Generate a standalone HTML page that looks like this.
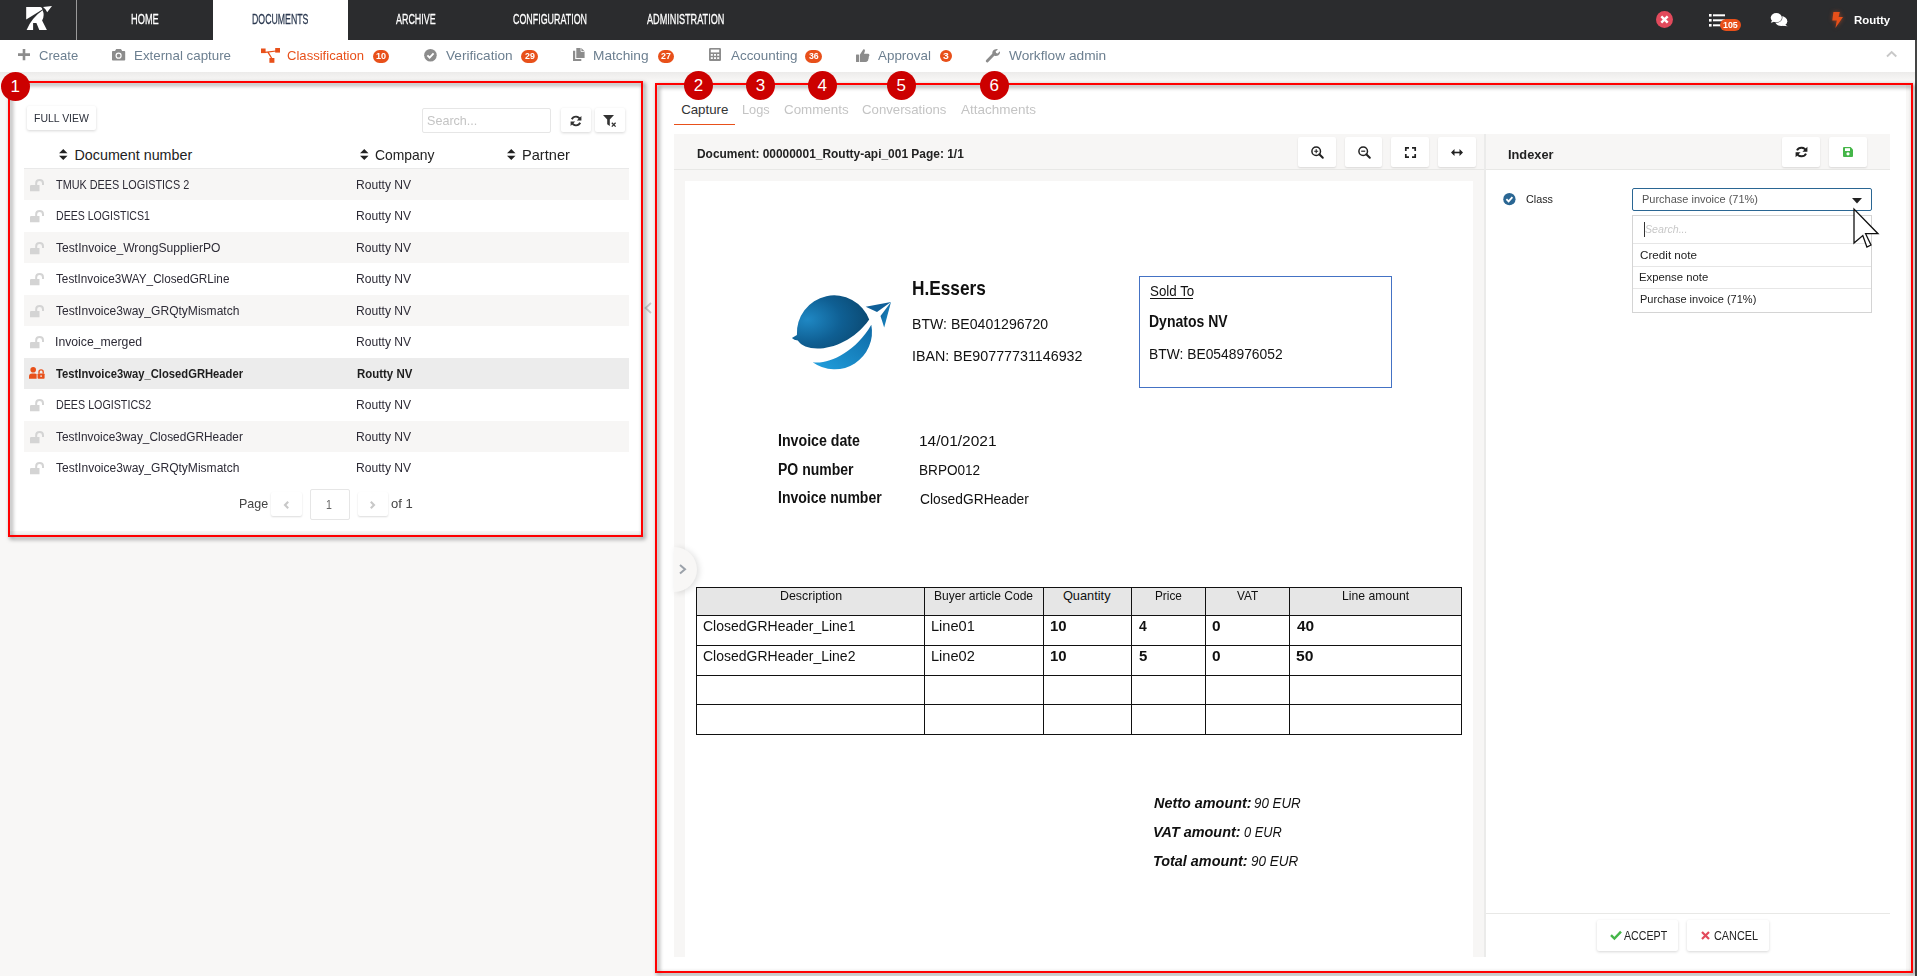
<!DOCTYPE html><html><head><meta charset="utf-8"><style>
html,body{margin:0;padding:0;}
body{width:1917px;height:976px;position:relative;overflow:hidden;background:#f8f7f6;font-family:"Liberation Sans",sans-serif;}
.t{position:absolute;white-space:nowrap;line-height:1;transform-origin:0 0;}
.r{position:absolute;box-sizing:border-box;}
svg.r{overflow:visible;}
</style></head><body>
<div class="r" style="left:0px;top:0px;width:1917px;height:40px;background:#2b2c2e"></div>
<div class="r" style="left:76px;top:0px;width:1px;height:40px;background:#9a9a9a"></div>
<div class="r" style="left:213px;top:0px;width:135px;height:40px;background:#fff"></div>
<svg class="r" style="left:0px;top:0px;" width="60" height="40" viewBox="0 0 60 40"><g fill="#fff"><path d="M26.2 6.9 L40.5 7.1 Q42.6 7.8 42.4 9.6 L26.2 19.4 Z"/><path d="M26.6 29.9 Q32 17.5 42.6 10.3 Q45 15.5 42.1 20.6 L46.9 29.9 L39.3 29.9 L36.4 23 L33.1 23 L33.1 29.9 Z"/><path d="M43 6.9 L52 5.9 L47.2 12.2 L45.6 9.4 Z"/></g></svg>
<div class="t" style="left:131.46px;top:10.60px;font-size:15.40px;color:#fff;transform:scaleX(0.6020);-webkit-text-stroke:0.3px #fff;">HOME</div>
<div class="t" style="left:252.10px;top:10.60px;font-size:15.40px;color:#2b3950;transform:scaleX(0.5688);-webkit-text-stroke:0.3px #2b3950;">DOCUMENTS</div>
<div class="t" style="left:396.00px;top:10.60px;font-size:15.40px;color:#fff;transform:scaleX(0.5808);-webkit-text-stroke:0.3px #fff;">ARCHIVE</div>
<div class="t" style="left:513.25px;top:10.60px;font-size:15.40px;color:#fff;transform:scaleX(0.5783);-webkit-text-stroke:0.3px #fff;">CONFIGURATION</div>
<div class="t" style="left:647.00px;top:10.60px;font-size:15.40px;color:#fff;transform:scaleX(0.5926);-webkit-text-stroke:0.3px #fff;">ADMINISTRATION</div>
<svg class="r" style="left:1656px;top:10.5px;" width="17" height="17" viewBox="0 0 17 17"><circle cx="8.5" cy="8.5" r="8.5" fill="#e24a5c"/><path d="M5.3 5.3 L11.7 11.7 M11.7 5.3 L5.3 11.7" stroke="#fff" stroke-width="2.4"/></svg>
<svg class="r" style="left:1709px;top:13.5px;" width="16" height="13" viewBox="0 0 16 13"><g fill="#fff"><rect x="0" y="0" width="2.6" height="2.6"/><rect x="4" y="0.3" width="12" height="2"/><rect x="0" y="5" width="2.6" height="2.6"/><rect x="4" y="5.3" width="12" height="2"/><rect x="0" y="10" width="2.6" height="2.6"/><rect x="4" y="10.3" width="12" height="2"/></g></svg>
<div class="r" style="left:1720px;top:18.8px;width:21px;height:12.4px;background:#e8501a;border-radius:7px"></div>
<div class="t" style="left:1722.97px;top:20.35px;font-size:9.50px;color:#fff;font-weight:bold;transform:scaleX(0.9327);">105</div>
<svg class="r" style="left:1769px;top:11px;" width="20" height="17" viewBox="0 0 20 17"><ellipse cx="12.3" cy="10.2" rx="6" ry="4.9" fill="#fff"/><path d="M15.5 13.2 L18.6 15.2 L13.5 14.8 Z" fill="#fff"/><ellipse cx="7.3" cy="6.7" rx="6.1" ry="5.1" fill="#2b2c2e"/><ellipse cx="7.3" cy="6.7" rx="5.6" ry="4.6" fill="#fff"/><path d="M3 9.6 L1.8 11.8 L5.6 10.8 Z" fill="#fff"/></svg>
<svg class="r" style="left:1831px;top:11px;filter:drop-shadow(0 0 2px rgba(232,80,26,.6))" width="13" height="18" viewBox="0 0 13 18"><path d="M2.4 1.1 L8.8 1.1 L7.6 6.1 L12 6.1 L4.4 17 L5.8 9.6 L1.3 9.6 Z" fill="#e8501a"/></svg>
<div class="t" style="left:1854.26px;top:14.80px;font-size:11.40px;color:#fff;font-weight:bold;transform:scaleX(1.0045);">Routty</div>
<div class="r" style="left:0px;top:40px;width:1917px;height:32px;background:#fff"></div>
<div class="r" style="left:0px;top:72px;width:1917px;height:9px;background:linear-gradient(#ecebea,#f8f7f6)"></div>
<div class="r" style="left:1915px;top:40px;width:2px;height:936px;background:#454545"></div>
<svg class="r" style="left:17.5px;top:49.4px;" width="12" height="11.2" viewBox="0 0 12 11.2"><path d="M6 0 V11.2 M0 5.6 H12" stroke="#8c8c8c" stroke-width="2.6"/></svg>
<div class="t" style="left:38.75px;top:48.90px;font-size:13.20px;color:#6c7f90;transform:scaleX(0.9893);">Create</div>
<svg class="r" style="left:111.8px;top:49px;" width="13.2" height="11.6" viewBox="0 0 13.2 11.6"><path d="M4.2 0 H9 L10.2 2 H12.4 Q13.2 2 13.2 2.8 V10.8 Q13.2 11.6 12.4 11.6 H0.8 Q0 11.6 0 10.8 V2.8 Q0 2 0.8 2 H3 Z" fill="#8c8c8c"/><circle cx="6.6" cy="6.7" r="3.1" fill="#fff"/><circle cx="6.6" cy="6.7" r="1.9" fill="#8c8c8c"/></svg>
<div class="t" style="left:133.53px;top:48.90px;font-size:13.20px;color:#6c7f90;transform:scaleX(1.0105);">External capture</div>
<svg class="r" style="left:261px;top:47.8px;" width="19.3" height="14.8" viewBox="0 0 19.3 14.8"><g fill="#e8501a"><rect x="0" y="0.5" width="4.6" height="4.6"/><rect x="14.2" y="0" width="4.8" height="4.6"/><rect x="8.4" y="10" width="5" height="4.8"/><path d="M3.5 3.8 L15 2.6 L15.2 3.6 L8 4.6 L11.5 10.5 L10.5 11 L6.5 4.8 L3.8 5 Z"/></g></svg>
<div class="t" style="left:286.85px;top:48.90px;font-size:13.20px;color:#e8501a;transform:scaleX(0.9922);">Classification</div>
<svg class="r" style="left:424px;top:48.9px;" width="12.9" height="12.6" viewBox="0 0 12.9 12.6"><circle cx="6.45" cy="6.3" r="6.3" fill="#8c8c8c"/><path d="M3.4 6.4 L5.6 8.6 L9.6 4.4" stroke="#fff" stroke-width="1.9" fill="none"/></svg>
<div class="t" style="left:446.00px;top:48.90px;font-size:13.20px;color:#6c7f90;transform:scaleX(1.0321);">Verification</div>
<svg class="r" style="left:573px;top:48.4px;" width="11.6" height="12.9" viewBox="0 0 11.6 12.9"><g fill="#8c8c8c"><path d="M3.3 0 H8.3 L11.6 3.2 V10 H3.3 Z"/><path d="M0 2.8 H2.2 V11 H8.3 V12.9 H0 Z"/></g><path d="M8 0 V3.5 H11.6" fill="none" stroke="#fff" stroke-width="0.8"/></svg>
<div class="t" style="left:593.30px;top:48.90px;font-size:13.20px;color:#6c7f90;transform:scaleX(1.0391);">Matching</div>
<svg class="r" style="left:709px;top:48.4px;" width="12" height="12.9" viewBox="0 0 12 12.9"><rect x="0" y="0" width="12" height="12.9" rx="1.2" fill="#8c8c8c"/><rect x="1.8" y="1.6" width="8.4" height="2.8" fill="#fff"/><g fill="#fff"><rect x="1.8" y="6" width="2" height="1.8"/><rect x="5" y="6" width="2" height="1.8"/><rect x="8.2" y="6" width="2" height="1.8"/><rect x="1.8" y="9.2" width="2" height="1.8"/><rect x="5" y="9.2" width="2" height="1.8"/><rect x="8.2" y="9.2" width="2" height="1.8"/></g></svg>
<div class="t" style="left:730.60px;top:48.90px;font-size:13.20px;color:#6c7f90;transform:scaleX(1.0173);">Accounting</div>
<svg class="r" style="left:855.6px;top:48.7px;" width="13.4" height="13.1" viewBox="0 0 13.4 13.1"><g fill="#8c8c8c"><rect x="0" y="5.6" width="3" height="7.5" rx="0.5"/><path d="M3.8 5.8 L6.6 1.5 Q7.2 0 8.2 0.3 Q9.4 0.8 8.8 2.6 L8 4.8 H12 Q13.4 4.8 13.4 6.2 Q13.4 7 12.8 7.3 Q13.3 8 12.6 8.8 Q13 9.6 12.2 10.4 Q12.4 11.4 11.6 12 Q11 13.1 9.5 13.1 H3.8 Z"/></g></svg>
<div class="t" style="left:878.20px;top:48.90px;font-size:13.20px;color:#6c7f90;transform:scaleX(1.0160);">Approval</div>
<svg class="r" style="left:985.9px;top:48.7px;" width="14.1" height="13.1" viewBox="0 0 14.1 13.1"><path d="M1.2 12 L7.5 5.6" stroke="#8c8c8c" stroke-width="2.8" stroke-linecap="round"/><path d="M6.3 4.6 Q6 1 9.6 0.2 Q11.2 0 12 0.3 L9.6 2.6 L10.2 4 L11.6 4.5 L13.9 2.2 Q14.3 3.5 13.6 5 Q12.2 7.6 8.8 7 Z" fill="#8c8c8c"/></svg>
<div class="t" style="left:1008.50px;top:48.90px;font-size:13.20px;color:#6c7f90;transform:scaleX(1.0392);">Workflow admin</div>
<div class="r" style="left:373.3px;top:50px;width:15.5px;height:12.6px;background:#e8501a;border-radius:7px"></div>
<div class="t" style="left:375.91px;top:52.30px;font-size:9.00px;color:#fff;font-weight:bold;transform:scaleX(1.0071);">10</div>
<div class="r" style="left:521px;top:50px;width:17px;height:12.6px;background:#e8501a;border-radius:7px"></div>
<div class="t" style="left:524.64px;top:52.30px;font-size:9.00px;color:#fff;font-weight:bold;transform:scaleX(0.9782);">29</div>
<div class="r" style="left:657.8px;top:50px;width:16.200000000000045px;height:12.6px;background:#e8501a;border-radius:7px"></div>
<div class="t" style="left:661.03px;top:52.30px;font-size:9.00px;color:#fff;font-weight:bold;transform:scaleX(0.9829);">27</div>
<div class="r" style="left:805px;top:50px;width:17px;height:12.6px;background:#e8501a;border-radius:7px"></div>
<div class="t" style="left:808.73px;top:52.30px;font-size:9.00px;color:#fff;font-weight:bold;transform:scaleX(0.9689);">36</div>
<div class="r" style="left:939.9px;top:50px;width:12.2px;height:12.2px;background:#e8501a;border-radius:50%"></div>
<div class="t" style="left:943.19px;top:52.10px;font-size:9.00px;color:#fff;font-weight:bold;transform:scaleX(1.1556);">3</div>
<svg class="r" style="left:1886px;top:51px;" width="11.3" height="6.5" viewBox="0 0 11.3 6.5"><path d="M1 5.5 L5.65 1 L10.3 5.5" stroke="#c8c8c8" stroke-width="1.9" fill="none"/></svg>
<div class="r" style="left:10px;top:83px;width:631px;height:448px;background:#fff"></div>
<div class="r" style="left:27px;top:106px;width:69px;height:24px;background:#fff;border-radius:2px;box-shadow:0 1px 3px rgba(0,0,0,.16)"></div>
<div class="t" style="left:33.96px;top:113.30px;font-size:11.80px;color:#2b2f3a;transform:scaleX(0.8877);">FULL VIEW</div>
<div class="r" style="left:421.5px;top:108.4px;width:129.1px;height:24.3px;background:#fff;border:1px solid #e6e6e6;border-radius:2px"></div>
<div class="t" style="left:426.73px;top:113.60px;font-size:13.00px;color:#c4c4c4;transform:scaleX(0.9680);">Search...</div>
<div class="r" style="left:561px;top:108px;width:30px;height:24.3px;background:#fff;border-radius:2px;box-shadow:0 1px 3px rgba(0,0,0,.16)"></div>
<div class="r" style="left:595.2px;top:108px;width:29.8px;height:24.3px;background:#fff;border-radius:2px;box-shadow:0 1px 3px rgba(0,0,0,.16)"></div>
<svg class="r" style="left:570px;top:114.5px;" width="12" height="12" viewBox="0 0 12 12"><path d="M10.2 4.6 A4.6 4.6 0 0 0 1.8 4.2" stroke="#333" stroke-width="1.9" fill="none"/><path d="M1.8 7.4 A4.6 4.6 0 0 0 10.2 7.8" stroke="#333" stroke-width="1.9" fill="none"/><path d="M11.4 1 V5.6 H6.8 Z M0.6 11 V6.4 H5.2 Z" fill="#333"/></svg>
<svg class="r" style="left:603px;top:114.5px;" width="14" height="12" viewBox="0 0 14 12"><path d="M0 0 H11 L6.8 4.6 V11 L4.2 9.2 V4.6 Z" fill="#333"/><path d="M8.8 7.8 L12.6 11.6 M12.6 7.8 L8.8 11.6" stroke="#333" stroke-width="1.3"/></svg>
<svg class="r" style="left:58.8px;top:149.4px;" width="8.5" height="11" viewBox="0 0 8.5 11"><path d="M4.25 0 L8.5 4.3 H0 Z M4.25 11 L8.5 6.7 H0 Z" fill="#222"/></svg>
<div class="t" style="left:74.56px;top:147.65px;font-size:14.30px;color:#222;">Document number</div>
<svg class="r" style="left:359.6px;top:149.4px;" width="8.5" height="11" viewBox="0 0 8.5 11"><path d="M4.25 0 L8.5 4.3 H0 Z M4.25 11 L8.5 6.7 H0 Z" fill="#222"/></svg>
<div class="t" style="left:375.10px;top:147.65px;font-size:14.30px;color:#222;transform:scaleX(0.9721);">Company</div>
<svg class="r" style="left:506.8px;top:149.4px;" width="8.5" height="11" viewBox="0 0 8.5 11"><path d="M4.25 0 L8.5 4.3 H0 Z M4.25 11 L8.5 6.7 H0 Z" fill="#222"/></svg>
<div class="t" style="left:521.83px;top:147.65px;font-size:14.30px;color:#222;transform:scaleX(1.0210);">Partner</div>
<div class="r" style="left:24px;top:168px;width:605px;height:1px;background:#e9e9e9"></div>
<div class="r" style="left:24px;top:168.5px;width:605px;height:31.5px;background:#f7f6f5"></div>
<svg class="r" style="left:29.8px;top:178.5px;" width="14.5" height="12.2" viewBox="0 0 14.5 12.2"><path d="M1.2 6 H9.5 V12.2 H0 V7 Q0 6 1.2 6Z" fill="#d4d4d4"/><path d="M6.2 6.5 V4.2 Q6.2 1 9.6 1 Q13 1 13 4.2 V6" stroke="#d4d4d4" stroke-width="2" fill="none"/></svg>
<div class="t" style="left:56.18px;top:178.60px;font-size:12.60px;color:#2d2b36;transform:scaleX(0.8615);">TMUK DEES LOGISTICS 2</div>
<div class="t" style="left:356.33px;top:178.60px;font-size:12.60px;color:#2d2b36;transform:scaleX(0.9595);">Routty NV</div>
<svg class="r" style="left:29.8px;top:210.0px;" width="14.5" height="12.2" viewBox="0 0 14.5 12.2"><path d="M1.2 6 H9.5 V12.2 H0 V7 Q0 6 1.2 6Z" fill="#d4d4d4"/><path d="M6.2 6.5 V4.2 Q6.2 1 9.6 1 Q13 1 13 4.2 V6" stroke="#d4d4d4" stroke-width="2" fill="none"/></svg>
<div class="t" style="left:55.55px;top:210.10px;font-size:12.60px;color:#2d2b36;transform:scaleX(0.8385);">DEES LOGISTICS1</div>
<div class="t" style="left:356.33px;top:210.10px;font-size:12.60px;color:#2d2b36;transform:scaleX(0.9595);">Routty NV</div>
<div class="r" style="left:24px;top:231.5px;width:605px;height:31.5px;background:#f7f6f5"></div>
<svg class="r" style="left:29.8px;top:241.5px;" width="14.5" height="12.2" viewBox="0 0 14.5 12.2"><path d="M1.2 6 H9.5 V12.2 H0 V7 Q0 6 1.2 6Z" fill="#d4d4d4"/><path d="M6.2 6.5 V4.2 Q6.2 1 9.6 1 Q13 1 13 4.2 V6" stroke="#d4d4d4" stroke-width="2" fill="none"/></svg>
<div class="t" style="left:56.16px;top:241.60px;font-size:12.60px;color:#2d2b36;transform:scaleX(0.9597);">TestInvoice_WrongSupplierPO</div>
<div class="t" style="left:356.33px;top:241.60px;font-size:12.60px;color:#2d2b36;transform:scaleX(0.9595);">Routty NV</div>
<svg class="r" style="left:29.8px;top:273.0px;" width="14.5" height="12.2" viewBox="0 0 14.5 12.2"><path d="M1.2 6 H9.5 V12.2 H0 V7 Q0 6 1.2 6Z" fill="#d4d4d4"/><path d="M6.2 6.5 V4.2 Q6.2 1 9.6 1 Q13 1 13 4.2 V6" stroke="#d4d4d4" stroke-width="2" fill="none"/></svg>
<div class="t" style="left:56.17px;top:273.10px;font-size:12.60px;color:#2d2b36;transform:scaleX(0.9314);">TestInvoice3WAY_ClosedGRLine</div>
<div class="t" style="left:356.33px;top:273.10px;font-size:12.60px;color:#2d2b36;transform:scaleX(0.9595);">Routty NV</div>
<div class="r" style="left:24px;top:294.5px;width:605px;height:31.5px;background:#f7f6f5"></div>
<svg class="r" style="left:29.8px;top:304.5px;" width="14.5" height="12.2" viewBox="0 0 14.5 12.2"><path d="M1.2 6 H9.5 V12.2 H0 V7 Q0 6 1.2 6Z" fill="#d4d4d4"/><path d="M6.2 6.5 V4.2 Q6.2 1 9.6 1 Q13 1 13 4.2 V6" stroke="#d4d4d4" stroke-width="2" fill="none"/></svg>
<div class="t" style="left:56.16px;top:304.60px;font-size:12.60px;color:#2d2b36;transform:scaleX(0.9564);">TestInvoice3way_GRQtyMismatch</div>
<div class="t" style="left:356.33px;top:304.60px;font-size:12.60px;color:#2d2b36;transform:scaleX(0.9595);">Routty NV</div>
<svg class="r" style="left:29.8px;top:336.0px;" width="14.5" height="12.2" viewBox="0 0 14.5 12.2"><path d="M1.2 6 H9.5 V12.2 H0 V7 Q0 6 1.2 6Z" fill="#d4d4d4"/><path d="M6.2 6.5 V4.2 Q6.2 1 9.6 1 Q13 1 13 4.2 V6" stroke="#d4d4d4" stroke-width="2" fill="none"/></svg>
<div class="t" style="left:55.30px;top:336.10px;font-size:12.60px;color:#2d2b36;transform:scaleX(0.9708);">Invoice_merged</div>
<div class="t" style="left:356.33px;top:336.10px;font-size:12.60px;color:#2d2b36;transform:scaleX(0.9595);">Routty NV</div>
<div class="r" style="left:24px;top:357.5px;width:605px;height:31.5px;background:#ececec"></div>
<svg class="r" style="left:29px;top:366.7px;" width="15.6" height="11.8" viewBox="0 0 15.6 11.8"><circle cx="4.2" cy="2.8" r="2.8" fill="#e8501a"/><path d="M0 11.8 V9.5 Q0 6.4 3 6.4 H5.5 Q7 6.4 7.6 7 V11.8Z" fill="#e8501a"/><rect x="8.6" y="6.4" width="7" height="5.4" rx="0.8" fill="#e8501a"/><path d="M10 6.6 V5 Q10 2.9 12.1 2.9 Q14.2 2.9 14.2 5 V6.6" stroke="#e8501a" stroke-width="1.4" fill="none"/><circle cx="12.1" cy="9.1" r="0.9" fill="#ececec"/></svg>
<div class="t" style="left:56.29px;top:367.60px;font-size:12.60px;color:#1e1e1e;font-weight:bold;transform:scaleX(0.8920);">TestInvoice3way_ClosedGRHeader</div>
<div class="t" style="left:356.56px;top:367.60px;font-size:12.60px;color:#1e1e1e;font-weight:bold;transform:scaleX(0.9087);">Routty NV</div>
<svg class="r" style="left:29.8px;top:399.0px;" width="14.5" height="12.2" viewBox="0 0 14.5 12.2"><path d="M1.2 6 H9.5 V12.2 H0 V7 Q0 6 1.2 6Z" fill="#d4d4d4"/><path d="M6.2 6.5 V4.2 Q6.2 1 9.6 1 Q13 1 13 4.2 V6" stroke="#d4d4d4" stroke-width="2" fill="none"/></svg>
<div class="t" style="left:55.54px;top:399.10px;font-size:12.60px;color:#2d2b36;transform:scaleX(0.8502);">DEES LOGISTICS2</div>
<div class="t" style="left:356.33px;top:399.10px;font-size:12.60px;color:#2d2b36;transform:scaleX(0.9595);">Routty NV</div>
<div class="r" style="left:24px;top:420.5px;width:605px;height:31.5px;background:#f7f6f5"></div>
<svg class="r" style="left:29.8px;top:430.5px;" width="14.5" height="12.2" viewBox="0 0 14.5 12.2"><path d="M1.2 6 H9.5 V12.2 H0 V7 Q0 6 1.2 6Z" fill="#d4d4d4"/><path d="M6.2 6.5 V4.2 Q6.2 1 9.6 1 Q13 1 13 4.2 V6" stroke="#d4d4d4" stroke-width="2" fill="none"/></svg>
<div class="t" style="left:56.16px;top:430.60px;font-size:12.60px;color:#2d2b36;transform:scaleX(0.9400);">TestInvoice3way_ClosedGRHeader</div>
<div class="t" style="left:356.33px;top:430.60px;font-size:12.60px;color:#2d2b36;transform:scaleX(0.9595);">Routty NV</div>
<svg class="r" style="left:29.8px;top:462.0px;" width="14.5" height="12.2" viewBox="0 0 14.5 12.2"><path d="M1.2 6 H9.5 V12.2 H0 V7 Q0 6 1.2 6Z" fill="#d4d4d4"/><path d="M6.2 6.5 V4.2 Q6.2 1 9.6 1 Q13 1 13 4.2 V6" stroke="#d4d4d4" stroke-width="2" fill="none"/></svg>
<div class="t" style="left:56.16px;top:462.10px;font-size:12.60px;color:#2d2b36;transform:scaleX(0.9564);">TestInvoice3way_GRQtyMismatch</div>
<div class="t" style="left:356.33px;top:462.10px;font-size:12.60px;color:#2d2b36;transform:scaleX(0.9595);">Routty NV</div>
<div class="t" style="left:238.50px;top:497.50px;font-size:12.60px;color:#444;transform:scaleX(0.9925);">Page</div>
<div class="r" style="left:271px;top:491.6px;width:31px;height:24.8px;background:#fff;border-radius:2px;box-shadow:0 1px 2px rgba(0,0,0,.14)"></div>
<svg class="r" style="left:284px;top:500.5px;" width="5" height="8" viewBox="0 0 5 8"><path d="M4.2 0.8 L1 4 L4.2 7.2" stroke="#c8c8c8" stroke-width="2.1" fill="none"/></svg>
<div class="r" style="left:309.5px;top:489.4px;width:40px;height:30.8px;background:#fff;border:1px solid #e6e6e6;border-radius:2px"></div>
<div class="t" style="left:326.01px;top:498.90px;font-size:12.60px;color:#666;transform:scaleX(0.8393);">1</div>
<div class="r" style="left:357.7px;top:491.6px;width:30.1px;height:24.8px;background:#fff;border-radius:2px;box-shadow:0 1px 2px rgba(0,0,0,.14)"></div>
<svg class="r" style="left:370px;top:500.5px;" width="5" height="8" viewBox="0 0 5 8"><path d="M0.8 0.8 L4 4 L0.8 7.2" stroke="#c8c8c8" stroke-width="2.1" fill="none"/></svg>
<div class="t" style="left:391.48px;top:497.50px;font-size:12.60px;color:#444;transform:scaleX(1.0348);">of 1</div>
<svg class="r" style="left:644.3px;top:302px;" width="8" height="12" viewBox="0 0 8 12"><path d="M7 1 L1.5 6 L7 11" stroke="#c8c8c8" stroke-width="1.8" fill="none"/></svg>
<div class="r" style="left:657px;top:85px;width:1249px;height:886px;background:#fff"></div>
<div class="t" style="left:681.13px;top:102.65px;font-size:13.30px;color:#333;">Capture</div>
<div class="r" style="left:674px;top:123.8px;width:61px;height:1.3px;background:#e8501a"></div>
<div class="t" style="left:741.98px;top:102.65px;font-size:13.30px;color:#c4c4c4;transform:scaleX(0.9623);">Logs</div>
<div class="t" style="left:783.53px;top:102.65px;font-size:13.30px;color:#c4c4c4;transform:scaleX(1.0051);">Comments</div>
<div class="t" style="left:862.14px;top:102.65px;font-size:13.30px;color:#c4c4c4;transform:scaleX(0.9934);">Conversations</div>
<div class="t" style="left:961.00px;top:102.65px;font-size:13.30px;color:#c4c4c4;transform:scaleX(1.0138);">Attachments</div>
<div class="r" style="left:674px;top:134px;width:811.5px;height:823px;background:#f7f6f5"></div>
<div class="r" style="left:674px;top:169px;width:811.5px;height:1px;background:#e8e8e6"></div>
<div class="t" style="left:697.22px;top:148.00px;font-size:12.60px;color:#222;font-weight:bold;transform:scaleX(0.9481);">Document: 00000001_Routty-api_001 Page: 1/1</div>
<div class="r" style="left:1298px;top:137.2px;width:38px;height:29.7px;background:#fff;border-radius:2px;box-shadow:0 1px 2px rgba(0,0,0,.12)"></div>
<div class="r" style="left:1345px;top:137.2px;width:37px;height:29.7px;background:#fff;border-radius:2px;box-shadow:0 1px 2px rgba(0,0,0,.12)"></div>
<div class="r" style="left:1391px;top:137.2px;width:38px;height:29.7px;background:#fff;border-radius:2px;box-shadow:0 1px 2px rgba(0,0,0,.12)"></div>
<div class="r" style="left:1438px;top:137.2px;width:38px;height:29.7px;background:#fff;border-radius:2px;box-shadow:0 1px 2px rgba(0,0,0,.12)"></div>
<svg class="r" style="left:1310.5px;top:146px;" width="13" height="13" viewBox="0 0 13 13"><circle cx="5.2" cy="5.2" r="4.3" stroke="#222" stroke-width="1.5" fill="none"/><path d="M8.3 8.3 L11.8 11.8" stroke="#222" stroke-width="2" stroke-linecap="round"/><path d="M5.2 3.2 V7.2 M3.2 5.2 H7.2" stroke="#222" stroke-width="1.1"/></svg>
<svg class="r" style="left:1357.5px;top:146px;" width="13" height="13" viewBox="0 0 13 13"><circle cx="5.2" cy="5.2" r="4.3" stroke="#222" stroke-width="1.5" fill="none"/><path d="M8.3 8.3 L11.8 11.8" stroke="#222" stroke-width="2" stroke-linecap="round"/><path d="M3.2 5.2 H7.2" stroke="#222" stroke-width="1.2"/></svg>
<svg class="r" style="left:1404.5px;top:146.5px;" width="11" height="11" viewBox="0 0 11 11"><path d="M0.8 4 V0.8 H4 M7 0.8 H10.2 V4 M10.2 7 V10.2 H7 M4 10.2 H0.8 V7" stroke="#222" stroke-width="1.7" fill="none"/></svg>
<svg class="r" style="left:1451px;top:148.5px;" width="12" height="7" viewBox="0 0 12 7"><path d="M2 3.5 H10" stroke="#222" stroke-width="1.6"/><path d="M0 3.5 L3.5 0 V7 Z M12 3.5 L8.5 0 V7 Z" fill="#222"/></svg>
<div class="r" style="left:685px;top:180.6px;width:788px;height:776.4px;background:#fff"></div>
<div class="r" style="left:1484px;top:134px;width:2px;height:823px;background:#ebebea"></div>
<div class="r" style="left:1486px;top:134px;width:404px;height:35px;background:#f7f6f5"></div>
<div class="r" style="left:1486px;top:169px;width:404px;height:1px;background:#e8e8e6"></div>
<div class="t" style="left:1507.97px;top:147.50px;font-size:13.00px;color:#222;font-weight:bold;transform:scaleX(0.9836);">Indexer</div>
<div class="r" style="left:1782px;top:137.1px;width:38px;height:30.2px;background:#fff;border-radius:2px;box-shadow:0 1px 2px rgba(0,0,0,.12)"></div>
<div class="r" style="left:1829px;top:137.1px;width:38px;height:30.2px;background:#fff;border-radius:2px;box-shadow:0 1px 2px rgba(0,0,0,.12)"></div>
<svg class="r" style="left:1794.5px;top:146px;" width="13" height="12" viewBox="0 0 13 12"><path d="M11.2 5 A5 5 0 0 0 2 4.4" stroke="#222" stroke-width="2" fill="none"/><path d="M1.8 7 A5 5 0 0 0 11 7.6" stroke="#222" stroke-width="2" fill="none"/><path d="M12.4 0.8 V5.8 H7.4 Z M0.6 11.2 V6.2 H5.6 Z" fill="#222"/></svg>
<svg class="r" style="left:1842.5px;top:147px;" width="10" height="10" viewBox="0 0 10 10"><path d="M0 1 Q0 0 1 0 H7.6 L10 2.4 V9 Q10 10 9 10 H1 Q0 10 0 9 Z" fill="#45b649"/><rect x="2" y="1.2" width="5" height="2.8" fill="#fff"/><circle cx="5" cy="6.8" r="1.6" fill="#fff"/></svg>
<svg class="r" style="left:1503.2px;top:193.1px;" width="12.8" height="12.3" viewBox="0 0 12.8 12.3"><circle cx="6.4" cy="6.15" r="6.15" fill="#2a6693"/><path d="M3.4 6.2 L5.6 8.4 L9.4 4.2" stroke="#fff" stroke-width="1.8" fill="none"/></svg>
<div class="t" style="left:1526.06px;top:194.10px;font-size:11.80px;color:#222;transform:scaleX(0.9159);">Class</div>
<div class="r" style="left:1632.4px;top:188.2px;width:239.3px;height:23px;background:#fff;border:1px solid #2a6693;border-radius:2px"></div>
<div class="t" style="left:1641.62px;top:194.25px;font-size:11.50px;color:#555;transform:scaleX(0.9551);">Purchase invoice (71%)</div>
<svg class="r" style="left:1851.7px;top:197.8px;" width="10" height="5.4" viewBox="0 0 10 5.4"><path d="M0 0 H10 L5 5.4 Z" fill="#222"/></svg>
<div class="r" style="left:1632.4px;top:215.2px;width:239.3px;height:97.8px;background:#fff;border:1px solid #d4d4d4"></div>
<div class="r" style="left:1644px;top:221.5px;width:1px;height:15px;background:#333"></div>
<div class="t" style="left:1644.73px;top:224.25px;font-size:11.50px;color:#c8c8c8;font-style:italic;transform:scaleX(0.9236);">Search...</div>
<div class="r" style="left:1633px;top:243px;width:238px;height:1px;background:#e6e6e6"></div>
<div class="t" style="left:1639.82px;top:249.55px;font-size:11.50px;color:#222;transform:scaleX(1.0145);">Credit note</div>
<div class="r" style="left:1633px;top:266.3px;width:238px;height:1px;background:#e6e6e6"></div>
<div class="t" style="left:1639.49px;top:271.55px;font-size:11.50px;color:#222;transform:scaleX(0.9849);">Expense note</div>
<div class="r" style="left:1633px;top:288.3px;width:238px;height:1px;background:#e6e6e6"></div>
<div class="t" style="left:1639.52px;top:293.85px;font-size:11.50px;color:#222;transform:scaleX(0.9576);">Purchase invoice (71%)</div>
<svg class="r" style="left:1852.6px;top:207.6px;" width="28" height="42" viewBox="0 0 28 42"><path d="M1 1 L1 35 L9.8 27.5 L13.9 39 L18 37 L12.6 25.7 L25 25.7 Z" fill="#fff" stroke="#111" stroke-width="1.3" stroke-linejoin="miter"/></svg>
<div class="r" style="left:1486px;top:913px;width:404px;height:1px;background:#e8e8e6"></div>
<div class="r" style="left:1597px;top:920.2px;width:81px;height:30.8px;background:#fff;border-radius:2px;box-shadow:0 1px 3px rgba(0,0,0,.16)"></div>
<div class="r" style="left:1687px;top:920.2px;width:82px;height:30.8px;background:#fff;border-radius:2px;box-shadow:0 1px 3px rgba(0,0,0,.16)"></div>
<svg class="r" style="left:1610px;top:930px;" width="12" height="10" viewBox="0 0 12 10"><path d="M1 5.2 L4.4 8.6 L11 1.6" stroke="#45b649" stroke-width="2.4" fill="none"/></svg>
<div class="t" style="left:1624.00px;top:930.00px;font-size:12.60px;color:#222;transform:scaleX(0.8458);">ACCEPT</div>
<svg class="r" style="left:1701px;top:931px;" width="9" height="9" viewBox="0 0 9 9"><path d="M1 1 L8 8 M8 1 L1 8" stroke="#e24a5c" stroke-width="2.2"/></svg>
<div class="t" style="left:1713.76px;top:930.00px;font-size:12.60px;color:#222;transform:scaleX(0.8645);">CANCEL</div>
<svg class="r" style="left:785px;top:285px;" width="115" height="90" viewBox="0 0 115 90"><defs><radialGradient id="g1" cx="0.2" cy="0.45" r="0.8"><stop offset="0" stop-color="#1f88c4"/><stop offset="0.55" stop-color="#0f5f93"/><stop offset="1" stop-color="#0b4a73"/></radialGradient><linearGradient id="g2" x1="0" y1="1" x2="1" y2="0"><stop offset="0" stop-color="#22a0de"/><stop offset="1" stop-color="#0e69a5"/></linearGradient><linearGradient id="g3" x1="0" y1="0" x2="1" y2="1"><stop offset="0" stop-color="#0f5a8e"/><stop offset="1" stop-color="#1b92d2"/></linearGradient></defs><path d="M6.9 53 Q9 55.2 12.8 55.6 C22 70 62 66 84.2 34.5 A37.4 37.4 0 0 0 11.9 50 Z" fill="url(#g1)"/><path d="M27.7 77.2 C42 80 70 68 86.3 39.7 A37.4 37.4 0 0 1 27.7 77.2 Z" fill="url(#g2)"/><path d="M80.7 21.7 L106 17 L92 27 Z" fill="#0f5f98"/><path d="M106 17 L95.5 31 L99.2 42.4 Z" fill="url(#g3)"/></svg>
<div class="t" style="left:911.68px;top:279.10px;font-size:19.80px;color:#111;font-weight:bold;transform:scaleX(0.8724);">H.Essers</div>
<div class="t" style="left:911.67px;top:316.10px;font-size:15.20px;color:#111;transform:scaleX(0.9282);">BTW: BE0401296720</div>
<div class="t" style="left:911.51px;top:347.50px;font-size:15.20px;color:#111;transform:scaleX(0.9406);">IBAN: BE90777731146932</div>
<div class="r" style="left:1139px;top:276.3px;width:253.4px;height:112.2px;border:1.6px solid #4472c4"></div>
<div class="t" style="left:1149.50px;top:284.00px;font-size:14.60px;color:#111;transform:scaleX(0.9139);">Sold To</div>
<div class="r" style="left:1150.1px;top:297.6px;width:43.1px;height:1px;background:#111"></div>
<div class="t" style="left:1149.09px;top:314.20px;font-size:15.80px;color:#111;font-weight:bold;transform:scaleX(0.8865);">Dynatos NV</div>
<div class="t" style="left:1148.89px;top:345.90px;font-size:15.20px;color:#111;transform:scaleX(0.9112);">BTW: BE0548976052</div>
<div class="t" style="left:778.48px;top:432.60px;font-size:15.80px;color:#111;font-weight:bold;transform:scaleX(0.8973);">Invoice date</div>
<div class="t" style="left:919.34px;top:432.90px;font-size:15.20px;color:#111;transform:scaleX(1.0195);">14/01/2021</div>
<div class="t" style="left:778.49px;top:461.80px;font-size:15.80px;color:#111;font-weight:bold;transform:scaleX(0.8868);">PO number</div>
<div class="t" style="left:919.41px;top:462.10px;font-size:15.20px;color:#111;transform:scaleX(0.8947);">BRPO012</div>
<div class="t" style="left:778.49px;top:490.40px;font-size:15.80px;color:#111;font-weight:bold;transform:scaleX(0.8883);">Invoice number</div>
<div class="t" style="left:919.81px;top:490.70px;font-size:15.20px;color:#111;transform:scaleX(0.9083);">ClosedGRHeader</div>
<div class="r" style="left:696.7px;top:587.4px;width:764.8999999999999px;height:27.800000000000068px;background:#e6e6e6"></div>
<div class="r" style="left:696.1px;top:586.8px;width:1.3px;height:148.2px;background:#111"></div>
<div class="r" style="left:923.8px;top:586.8px;width:1.3px;height:148.2px;background:#111"></div>
<div class="r" style="left:1042.7px;top:586.8px;width:1.3px;height:148.2px;background:#111"></div>
<div class="r" style="left:1130.8000000000002px;top:586.8px;width:1.3px;height:148.2px;background:#111"></div>
<div class="r" style="left:1205.0px;top:586.8px;width:1.3px;height:148.2px;background:#111"></div>
<div class="r" style="left:1289.0px;top:586.8px;width:1.3px;height:148.2px;background:#111"></div>
<div class="r" style="left:1461.0px;top:586.8px;width:1.3px;height:148.2px;background:#111"></div>
<div class="r" style="left:696.1px;top:586.8px;width:766.0999999999999px;height:1.3px;background:#111"></div>
<div class="r" style="left:696.1px;top:614.6px;width:766.0999999999999px;height:1.3px;background:#111"></div>
<div class="r" style="left:696.1px;top:644.9px;width:766.0999999999999px;height:1.3px;background:#111"></div>
<div class="r" style="left:696.1px;top:674.6px;width:766.0999999999999px;height:1.3px;background:#111"></div>
<div class="r" style="left:696.1px;top:704.1999999999999px;width:766.0999999999999px;height:1.3px;background:#111"></div>
<div class="r" style="left:696.1px;top:733.8px;width:766.0999999999999px;height:1.3px;background:#111"></div>
<div class="t" style="left:780.01px;top:589.90px;font-size:12.80px;color:#111;transform:scaleX(0.9693);">Description</div>
<div class="t" style="left:934.44px;top:589.90px;font-size:12.80px;color:#111;transform:scaleX(0.9408);">Buyer article Code</div>
<div class="t" style="left:1062.92px;top:589.90px;font-size:12.80px;color:#111;">Quantity</div>
<div class="t" style="left:1155.06px;top:589.90px;font-size:12.80px;color:#111;transform:scaleX(0.9208);">Price</div>
<div class="t" style="left:1237.00px;top:589.90px;font-size:12.80px;color:#111;transform:scaleX(0.9243);">VAT</div>
<div class="t" style="left:1341.62px;top:589.90px;font-size:12.80px;color:#111;transform:scaleX(0.9528);">Line amount</div>
<div class="t" style="left:703.30px;top:619.15px;font-size:14.30px;color:#111;transform:scaleX(0.9784);">ClosedGRHeader_Line1</div>
<div class="t" style="left:703.30px;top:648.85px;font-size:14.30px;color:#111;transform:scaleX(0.9784);">ClosedGRHeader_Line2</div>
<div class="t" style="left:930.83px;top:619.15px;font-size:14.30px;color:#111;transform:scaleX(1.0216);">Line01</div>
<div class="t" style="left:930.83px;top:648.85px;font-size:14.30px;color:#111;transform:scaleX(1.0216);">Line02</div>
<div class="t" style="left:1050.40px;top:619.15px;font-size:14.30px;color:#111;font-weight:bold;transform:scaleX(1.0472);">10</div>
<div class="t" style="left:1138.79px;top:619.15px;font-size:14.30px;color:#111;font-weight:bold;transform:scaleX(0.9713);">4</div>
<div class="t" style="left:1211.96px;top:619.15px;font-size:14.30px;color:#111;font-weight:bold;transform:scaleX(1.0814);">0</div>
<div class="t" style="left:1296.67px;top:619.15px;font-size:14.30px;color:#111;font-weight:bold;transform:scaleX(1.0819);">40</div>
<div class="t" style="left:1050.40px;top:648.85px;font-size:14.30px;color:#111;font-weight:bold;transform:scaleX(1.0472);">10</div>
<div class="t" style="left:1138.55px;top:648.85px;font-size:14.30px;color:#111;font-weight:bold;transform:scaleX(1.0490);">5</div>
<div class="t" style="left:1211.96px;top:648.85px;font-size:14.30px;color:#111;font-weight:bold;transform:scaleX(1.0814);">0</div>
<div class="t" style="left:1296.43px;top:648.85px;font-size:14.30px;color:#111;font-weight:bold;transform:scaleX(1.0975);">50</div>
<div class="t" style="left:1153.88px;top:795.80px;font-size:14.80px;color:#111;font-weight:bold;font-style:italic;transform:scaleX(0.9730);">Netto amount:</div>
<div class="t" style="left:1254.40px;top:795.80px;font-size:14.80px;color:#111;font-style:italic;transform:scaleX(0.9022);">90 EUR</div>
<div class="t" style="left:1152.95px;top:824.60px;font-size:14.80px;color:#111;font-weight:bold;font-style:italic;transform:scaleX(0.9740);">VAT amount:</div>
<div class="t" style="left:1244.39px;top:824.60px;font-size:14.80px;color:#111;font-style:italic;transform:scaleX(0.8657);">0 EUR</div>
<div class="t" style="left:1153.09px;top:853.80px;font-size:14.80px;color:#111;font-weight:bold;font-style:italic;transform:scaleX(0.9724);">Total amount:</div>
<div class="t" style="left:1251.10px;top:853.80px;font-size:14.80px;color:#111;font-style:italic;transform:scaleX(0.9120);">90 EUR</div>
<div class="r" style="left:674px;top:547px;width:23px;height:45px;background:#f8f7f6;border-radius:0 23px 23px 0;box-shadow:2px 1px 6px rgba(0,0,0,.13)"></div>
<svg class="r" style="left:678.7px;top:563.6px;" width="7.3" height="10.4" viewBox="0 0 7.3 10.4"><path d="M1 1 L6 5.2 L1 9.4" stroke="#9ca2aa" stroke-width="2" fill="none"/></svg>
<div class="r" style="left:8px;top:81px;width:635px;height:456px;border:2.2px solid #ff0000;filter:drop-shadow(2px 2px 2px rgba(0,0,0,.55))"></div>
<div class="r" style="left:655px;top:83px;width:1257.5px;height:890px;border:2.2px solid #ff0000;filter:drop-shadow(2px 2px 2px rgba(0,0,0,.55))"></div>
<div class="r" style="left:0.9000000000000004px;top:71.9px;width:29.2px;height:29.2px;background:#cc0000;border-radius:50%"></div>
<div class="t" style="left:10.53px;top:78.30px;font-size:17.00px;color:#fff;">1</div>
<div class="r" style="left:683.8px;top:70.9px;width:29.2px;height:29.2px;background:#cc0000;border-radius:50%"></div>
<div class="t" style="left:693.64px;top:77.30px;font-size:17.00px;color:#fff;">2</div>
<div class="r" style="left:745.9px;top:70.9px;width:29.2px;height:29.2px;background:#cc0000;border-radius:50%"></div>
<div class="t" style="left:755.82px;top:77.30px;font-size:17.00px;color:#fff;">3</div>
<div class="r" style="left:807.6999999999999px;top:70.9px;width:29.2px;height:29.2px;background:#cc0000;border-radius:50%"></div>
<div class="t" style="left:817.62px;top:77.30px;font-size:17.00px;color:#fff;">4</div>
<div class="r" style="left:886.6px;top:70.9px;width:29.2px;height:29.2px;background:#cc0000;border-radius:50%"></div>
<div class="t" style="left:896.48px;top:77.30px;font-size:17.00px;color:#fff;">5</div>
<div class="r" style="left:979.6999999999999px;top:70.9px;width:29.2px;height:29.2px;background:#cc0000;border-radius:50%"></div>
<div class="t" style="left:989.50px;top:77.30px;font-size:17.00px;color:#fff;">6</div>
</body></html>
